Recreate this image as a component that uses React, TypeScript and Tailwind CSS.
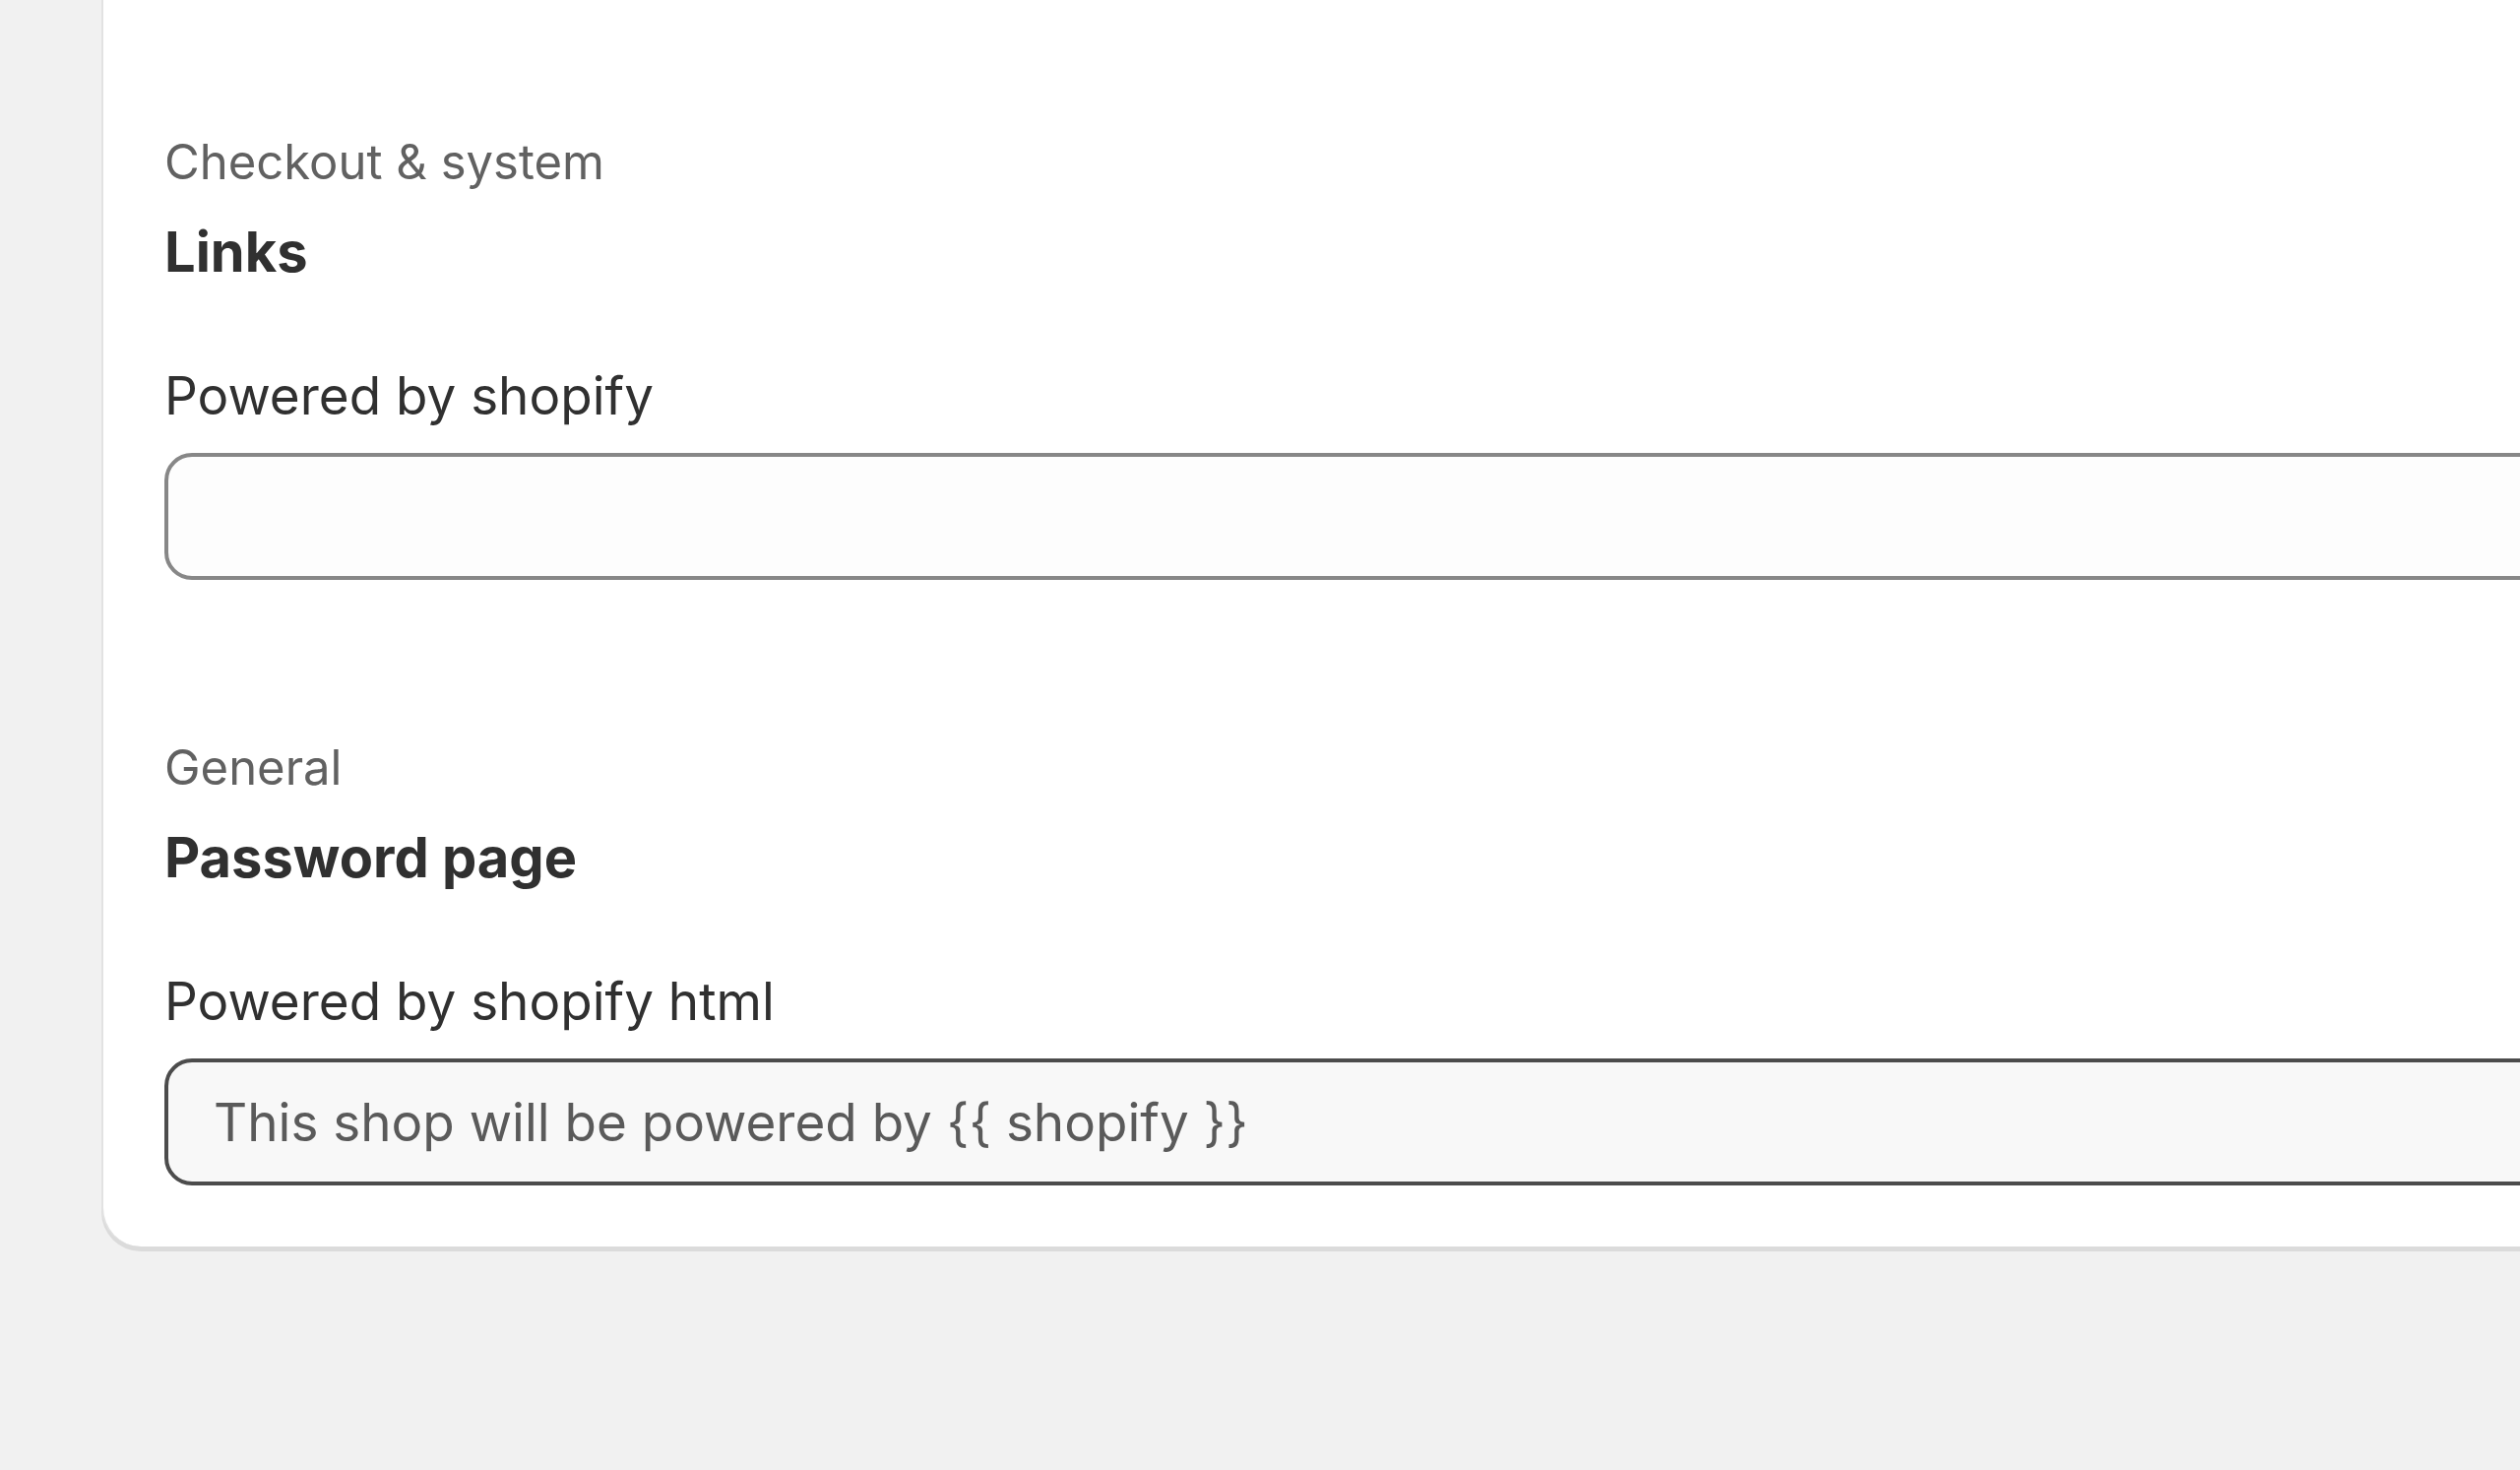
import { useState } from 'react';

const sections = [
  {
    caption: 'Checkout & system',
    title: 'Links',
    label: 'Powered by shopify',
    value: '',
    active: false,
  },
  {
    caption: 'General',
    title: 'Password page',
    label: 'Powered by shopify html',
    value: 'This shop will be powered by {{ shopify }}',
    active: true,
  },
];

function SettingField({
  label,
  initial,
  active,
}: {
  label: string;
  initial: string;
  active: boolean;
}) {
  const [value, setValue] = useState(initial);

  return (
    <div className="flex flex-col">
      <label className="text-[53px] leading-[80px] text-[#303030]">{label}</label>
      <input
        type="text"
        value={value}
        onChange={(e) => setValue(e.target.value)}
        className={`mt-[18px] h-[129px] w-full rounded-[28px] border-[4px] px-[46px] text-[53px] text-[#5a5a5a] outline-none ${
          active ? 'border-[#4c4c4c] bg-[#f8f8f8]' : 'border-[#878787] bg-[#fdfdfd]'
        }`}
      />
    </div>
  );
}

export default function App() {
  return (
    <div className="h-[1493px] w-[2560px] overflow-hidden bg-[#f1f1f1] font-['Inter',sans-serif]">
      <div className="ml-[103px] w-[2600px] rounded-bl-[40px] border-l-[2px] border-[#e2e2e2] bg-white pl-[62px] pr-[64px] pt-[133px] pb-[62px] shadow-[0_5px_0_rgba(0,0,0,0.09)]">
        <div className="flex flex-col gap-[159px]">
          {sections.map((s) => (
            <div key={s.title} className="flex flex-col">
              {/* Section header */}
              <div className="text-[49px] leading-[64px] text-[#616161]">{s.caption}</div>
              <h2 className="mt-[23px] text-[56px] font-[650] leading-[72px] text-[#303030]">{s.title}</h2>

              <div className="mt-[70px]">
                <SettingField label={s.label} initial={s.value} active={s.active} />
              </div>
            </div>
          ))}
        </div>
      </div>
    </div>
  );
}
